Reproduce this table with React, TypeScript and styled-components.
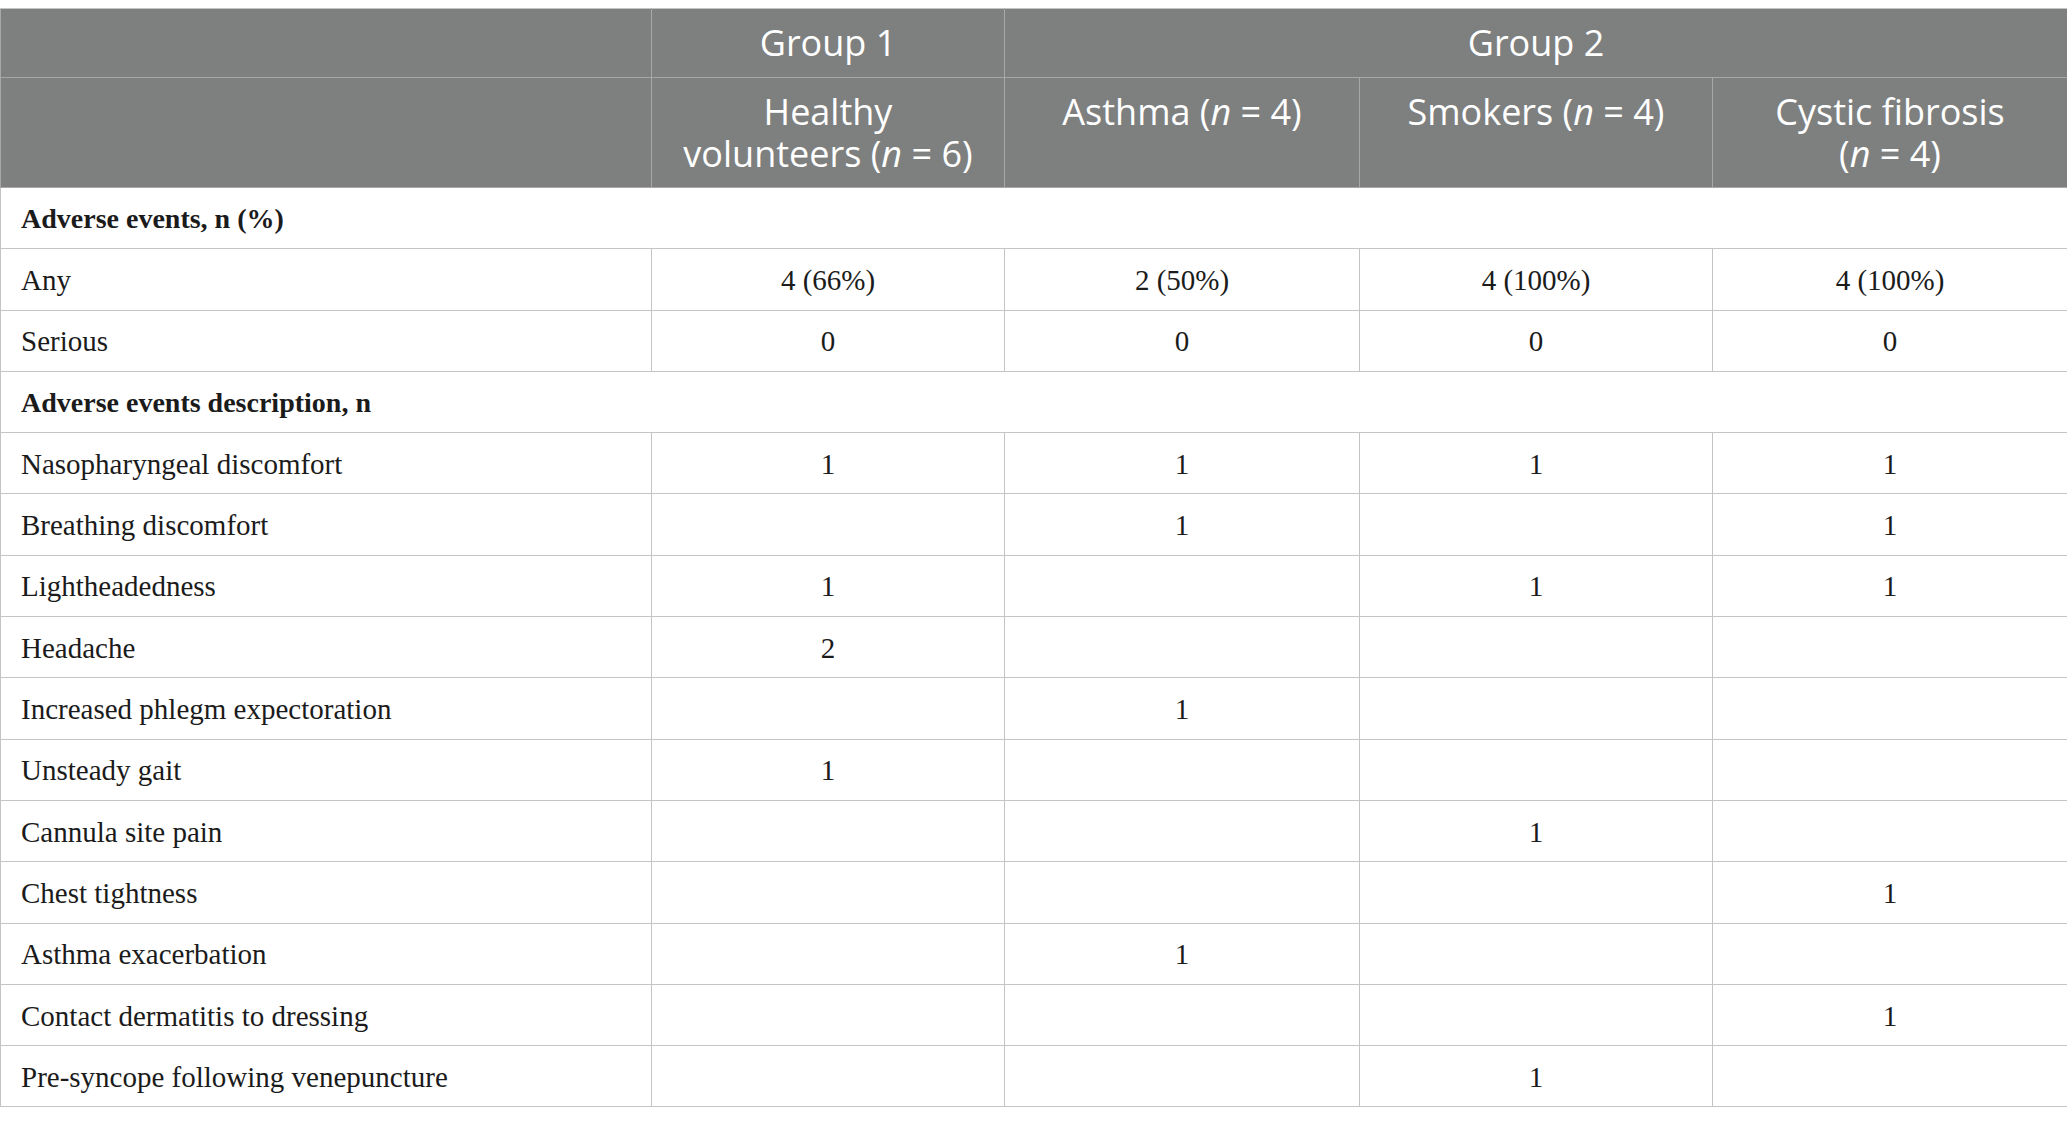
import React from "react";
import styled, { createGlobalStyle } from "styled-components";

const Global = createGlobalStyle`
  html, body { margin: 0; padding: 0; background: #ffffff; }
  body { padding-top: 8px; }
`;

const Table = styled.table`
  width: 2067px;
  border-collapse: collapse;
  table-layout: fixed;
  border: 1px solid #c4c4c4;
`;

const HeadRow = styled.tr<{ $h: number }>`
  height: ${(p) => p.$h}px;
  background: #7e807f;
`;

const HeadCell = styled.th`
  font-family: "Open Sans", "Noto Sans", sans-serif;
  font-weight: 400;
  font-size: 36px;
  line-height: 42px;
  color: #ffffff;
  text-align: center;
  vertical-align: top;
  padding: 13px 18px 12px;
  border: 1px solid #a7a8a7;
  border-top-color: #c4c4c4;
`;

const Nowrap = styled.span`
  white-space: nowrap;
`;

const BodyRow = styled.tr`
  height: 61.3px;
`;

const Cell = styled.td<{ $label?: boolean; $bold?: boolean }>`
  font-family: "Liberation Serif", "Times New Roman", serif;
  font-size: ${(p) => (p.$bold ? 28 : 29)}px;
  font-weight: ${(p) => (p.$bold ? 700 : 400)};
  color: #1b1b1b;
  text-align: ${(p) => (p.$label ? "left" : "center")};
  vertical-align: middle;
  padding: 2px 20px 0;
  border: 1px solid #c4c4c4;
`;

type Row = { label: string; bold?: boolean; vals?: string[] };

const rows: Row[] = [
  { label: "Adverse events, n (%)", bold: true },
  { label: "Any", vals: ["4 (66%)", "2 (50%)", "4 (100%)", "4 (100%)"] },
  { label: "Serious", vals: ["0", "0", "0", "0"] },
  { label: "Adverse events description, n", bold: true },
  { label: "Nasopharyngeal discomfort", vals: ["1", "1", "1", "1"] },
  { label: "Breathing discomfort", vals: ["", "1", "", "1"] },
  { label: "Lightheadedness", vals: ["1", "", "1", "1"] },
  { label: "Headache", vals: ["2", "", "", ""] },
  { label: "Increased phlegm expectoration", vals: ["", "1", "", ""] },
  { label: "Unsteady gait", vals: ["1", "", "", ""] },
  { label: "Cannula site pain", vals: ["", "", "1", ""] },
  { label: "Chest tightness", vals: ["", "", "", "1"] },
  { label: "Asthma exacerbation", vals: ["", "1", "", ""] },
  { label: "Contact dermatitis to dressing", vals: ["", "", "", "1"] },
  { label: "Pre-syncope following venepuncture", vals: ["", "", "1", ""] },
];

const N = ({ v }: { v: number }) => (
  <Nowrap>
    (<i>n</i> = {v})
  </Nowrap>
);

export default function App() {
  return (
    <>
      <Global />
      <Table>
        <colgroup>
          <col style={{ width: 651 }} />
          <col style={{ width: 353 }} />
          <col style={{ width: 355 }} />
          <col style={{ width: 353 }} />
          <col style={{ width: 355 }} />
        </colgroup>
        <thead>
          <HeadRow $h={69}>
            <HeadCell />
            <HeadCell>Group 1</HeadCell>
            <HeadCell colSpan={3}>Group 2</HeadCell>
          </HeadRow>
          <HeadRow $h={110}>
            <HeadCell />
            <HeadCell>
              Healthy volunteers <N v={6} />
            </HeadCell>
            <HeadCell>
              Asthma <N v={4} />
            </HeadCell>
            <HeadCell>
              Smokers <N v={4} />
            </HeadCell>
            <HeadCell>
              Cystic fibrosis <N v={4} />
            </HeadCell>
          </HeadRow>
        </thead>
        <tbody>
          {rows.map((r) =>
            r.vals ? (
              <BodyRow key={r.label}>
                <Cell $label>{r.label}</Cell>
                {r.vals.map((v, i) => (
                  <Cell key={i}>{v}</Cell>
                ))}
              </BodyRow>
            ) : (
              <BodyRow key={r.label}>
                <Cell $label $bold colSpan={5}>
                  {r.label}
                </Cell>
              </BodyRow>
            )
          )}
        </tbody>
      </Table>
    </>
  );
}
